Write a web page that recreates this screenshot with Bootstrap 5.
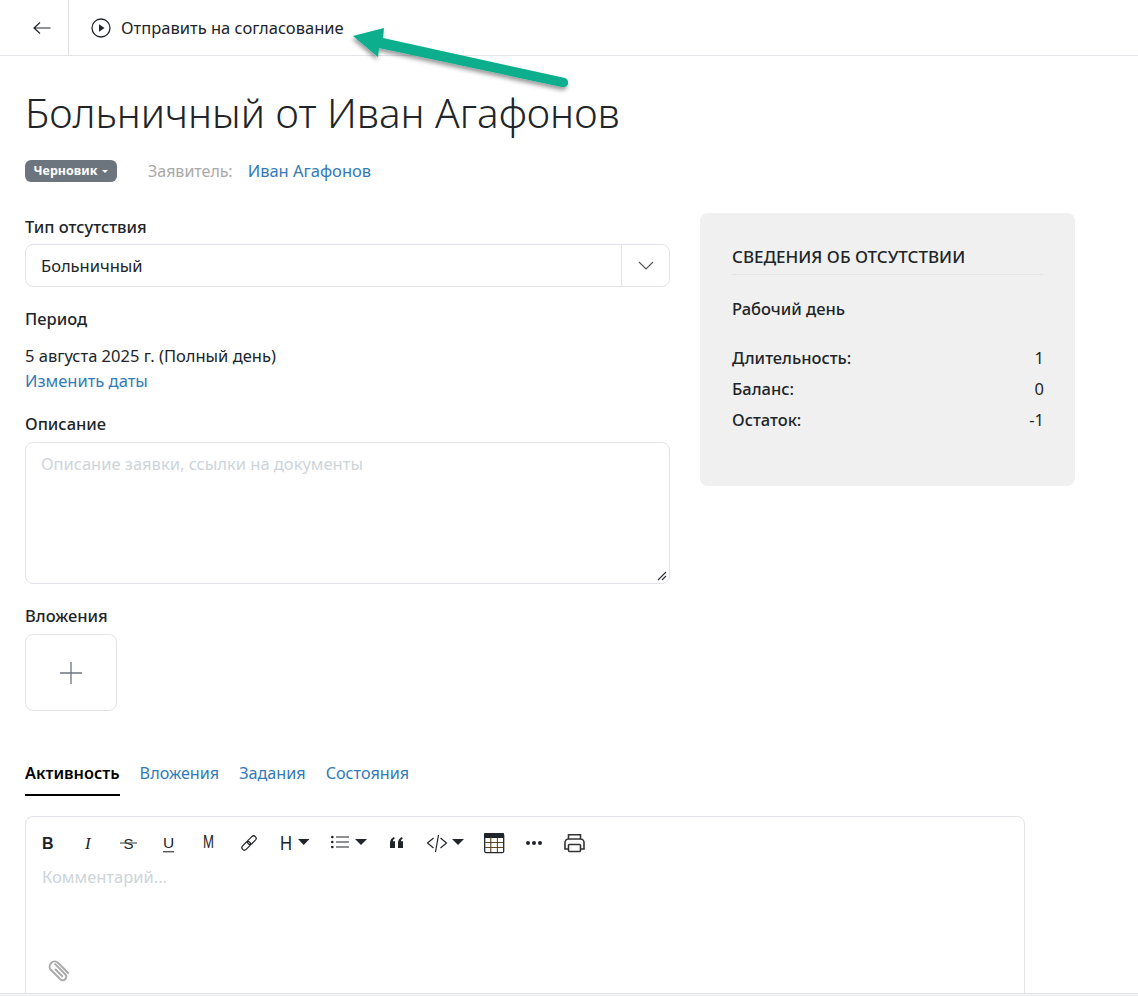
<!DOCTYPE html>
<html lang="ru"><head><meta charset="utf-8">
<link href="https://cdn.jsdelivr.net/npm/bootstrap@5.3.0/dist/css/bootstrap.min.css" rel="stylesheet">
<style>
html,body{height:996px;overflow:hidden}
body{font-family:"Noto Sans","Open Sans",sans-serif;font-size:16.5px;color:#212529;background:#fff}
.topbar{height:56px;border-bottom:1px solid #e3e4e8;position:relative}
.backcell{width:69px;border-right:1px solid #dfe1e6;padding-left:15px}
.sendbtn{padding-left:22px;gap:10px;color:#212529}
.sendtext{margin-top:2px}
.pagewrap{padding:0 25px}
.pagetitle{font-size:40.5px;font-weight:300;line-height:52px;margin:31px 0 20px;color:#212529}
.metarow{height:24px}
.statusbadge{background:#6c757d;color:#fff;font-size:12.5px;font-weight:700;border-radius:6px;width:92px;height:22px;gap:5px}
.caretmini{border-left:3px solid transparent;border-right:3px solid transparent;border-top:3px solid #fff}
.applabel{color:#a9a9a9;font-size:16px;margin-left:31px;margin-right:15px}
.applink,.linkblue{color:#337ab7;text-decoration:none}
.formcol{width:645px;flex:none}
.sidecol{width:375px;flex:none;margin-left:30px;margin-top:9px;height:273px;background:#f0f0f0;border-radius:8px;padding:32px}
.fieldlabel{font-weight:500;line-height:24px;margin-bottom:5px;color:#212529}
.selectbox{height:43px;border:1px solid #e2e3e8;border-radius:8px}
.selectval{padding-left:15px;padding-top:2px}
.selectcaret{width:48px;border-left:1px solid #e2e3e8}
.periodline{line-height:25px}
.descbox{height:142px;border:1px solid #e2e3e8;border-radius:8px;padding:9px 15px;color:#ced4da;position:relative}
.grip{position:absolute;right:2px;bottom:2px}
.addtile{width:92px;height:77px;border:1px solid #e2e3e8;border-radius:8px}
.sidehead{font-size:17px;font-weight:500;line-height:24px;padding-bottom:5px;border-bottom:1px solid #e4e4e4;margin-bottom:22px}
.siderow{line-height:31px}
.sideb{font-weight:500}
.sideval{margin-right:-1px}
.tabsrow{margin-top:50px;gap:20px;height:35px}
.tabitem{color:#337ab7;text-decoration:none;line-height:24px;height:35px;font-size:16.2px}
.tabitem.active-tab{color:#000;font-weight:600;border-bottom:2px solid #000;font-size:16.3px}
.editorbox{width:1000px;height:200px;margin-top:20px;border:1px solid #e2e3e8;border-radius:8px 8px 0 0;position:relative;padding:0 16px}
.toolrow{height:51px;align-items:flex-start;padding-top:14px;color:#212529}
.placeh{color:#ced4da;line-height:20px;margin-top:-1px}
.clip{position:absolute;left:22px;top:140px}
.bottomstrip{position:absolute;left:0;right:0;top:993px;height:3px;background:#f1f2f4;border-top:1px solid #e3e4e8}
.arrowover{position:absolute;left:345px;top:20px;pointer-events:none}
</style></head><body>
<div class="topbar d-flex">
  <div class="backcell d-flex align-items-center justify-content-center">
    <svg width="20" height="14" viewBox="0 0 20 14" fill="none" stroke="#212529" stroke-width="1.2"><path d="M18.5 7H2M8 1.5 2 7l6 5.5"/></svg>
  </div>
  <div class="sendbtn d-flex align-items-center">
    <svg width="20" height="20" viewBox="0 0 20 20"><circle cx="10" cy="10" r="9" fill="none" stroke="#212529" stroke-width="1.3"/><path d="M8 6.2 13.5 10 8 13.8z" fill="#212529"/></svg>
    <span class="sendtext">Отправить на согласование</span>
  </div>
</div>
<svg class="arrowover" width="240" height="80" viewBox="0 0 240 80"><defs><filter id="sh" x="-10%" y="-20%" width="120%" height="160%"><feDropShadow dx="-1" dy="3" stdDeviation="2" flood-color="#000" flood-opacity=".4"/></filter></defs><path d="M8 16 39 8 38 18 220 58C225 60 224 68 217 67L34 28 33 37z" fill="#09ae8d" filter="url(#sh)"/></svg>
<div class="pagewrap">
  <h1 class="pagetitle">Больничный от Иван Агафонов</h1>
  <div class="metarow d-flex align-items-center">
    <span class="statusbadge d-inline-flex align-items-center justify-content-center">Черновик <i class="caretmini"></i></span>
    <span class="applabel">Заявитель:</span>
    <a class="applink" href="#">Иван Агафонов</a>
  </div>
  <div class="d-flex" style="margin-top:21px">
    <div class="formcol">
      <div class="fieldlabel" style="margin-top:11px;margin-bottom:5px">Тип отсутствия</div>
      <div class="selectbox d-flex align-items-center">
        <div class="selectval flex-grow-1">Больничный</div>
        <div class="selectcaret h-100 d-flex align-items-center justify-content-center">
          <svg width="16" height="9" viewBox="0 0 16 9" fill="none" stroke="#555" stroke-width="1.1"><path d="M1 1l7 7 7-7"/></svg>
        </div>
      </div>
      <div class="fieldlabel" style="margin-top:20px;margin-bottom:12px">Период</div>
      <div class="periodline">5 августа 2025 г. (Полный день)</div>
      <a class="linkblue periodline d-block" href="#">Изменить даты</a>
      <div class="fieldlabel" style="margin-top:19px;margin-bottom:6px">Описание</div>
      <div class="descbox">Описание заявки, ссылки на документы
        <svg class="grip" width="10" height="10" viewBox="0 0 10 10" stroke="#333" stroke-width="1.1"><path d="M1 9 9 1M5 9 9 5"/></svg>
      </div>
      <div class="fieldlabel" style="margin-top:20px;margin-bottom:6px">Вложения</div>
      <div class="addtile d-flex align-items-center justify-content-center">
        <svg width="24" height="24" viewBox="0 0 24 24" stroke="#6c757d" stroke-width="1.3"><path d="M12 1v22M1 12h22"/></svg>
      </div>
    </div>
    <div class="sidecol">
      <div class="sidehead">СВЕДЕНИЯ ОБ ОТСУТСТВИИ</div>
      <div class="sideb" style="line-height:24px;margin-bottom:21px">Рабочий день</div>
      <div class="siderow d-flex justify-content-between"><span class="sideb">Длительность:</span><span class="sideval">1</span></div>
      <div class="siderow d-flex justify-content-between"><span class="sideb">Баланс:</span><span class="sideval">0</span></div>
      <div class="siderow d-flex justify-content-between"><span class="sideb">Остаток:</span><span class="sideval">-1</span></div>
    </div>
  </div>
  <div class="tabsrow d-flex">
    <a class="tabitem active-tab" href="#">Активность</a>
    <a class="tabitem" href="#">Вложения</a>
    <a class="tabitem" href="#">Задания</a>
    <a class="tabitem" href="#">Состояния</a>
  </div>
  <div class="editorbox">
    <div class="toolrow d-flex">
      <svg width="560" height="24" viewBox="0 0 560 24" style="display:block">
        <g fill="#212529" font-family="Liberation Sans,sans-serif">
          <text x="0" y="18" font-weight="700" font-size="16" textLength="11">B</text>
          <text x="43" y="18" font-style="italic" font-family="Liberation Serif,serif" font-size="17">I</text>
          <text x="81.500" y="17.500" font-size="15">S</text>
          <path d="M78 12h17" stroke="#555" stroke-width="1.200"/>
          <text x="121" y="17" font-size="15.500">U</text><path d="M121 20h11v1.400h-11z" fill="#555"/>
          <text x="161" y="17" font-size="18" textLength="11" lengthAdjust="spacingAndGlyphs">M</text>
          <g fill="none" stroke="#212529" stroke-width="1.200" transform="rotate(-45 207 12)"><rect x="198" y="9.500" width="10" height="5" rx="2.500"/><rect x="206" y="9.500" width="10" height="5" rx="2.500"/></g>
          <text x="238" y="19" font-size="21" textLength="12" lengthAdjust="spacingAndGlyphs">H</text><path d="M256 8h11.500l-5.750 6z"/>
          <circle cx="290.300" cy="6" r="1.300"/><circle cx="290.300" cy="11" r="1.300"/><circle cx="290.300" cy="16" r="1.300"/><path d="M294 5.500h13v1.100h-13zM294 10.500h13v1.100h-13zM294 15.500h13v1.100h-13z"/><path d="M313 8h12l-6 6z"/>
          <path d="M348 17v-5c0-3 1.700-5 4-6l.8 1.500c-1.200.8-1.800 1.600-1.900 2.700h2.100V17zM356 17v-5c0-3 1.700-5 4-6l.8 1.500c-1.200.8-1.800 1.600-1.900 2.700h2.100V17z"/>
          <g fill="none" stroke="#212529" stroke-width="1.200"><path d="M391.500 7l-6 5 6 5M398.500 7l6 5-6 5M396.500 4l-3 17"/></g><path d="M410 8h12l-6 6z"/>
          <rect x="442.700" y="2.700" width="19" height="19" rx="1.500" fill="#fff" stroke="#212529" stroke-width="1.300"/><rect x="442" y="2" width="20" height="5" rx="1" fill="#212529"/><path d="M448.800 7v14M455.400 7v14M443 11.500h18M443 16.500h18" stroke="#c87d2b" fill="none" stroke-width="1"/><path d="M448.800 7v14M455.400 7v14M443 11.500h18M443 16.500h18" stroke="#212529" fill="none" stroke-width=".6"/>
          <circle cx="486" cy="12" r="2"/><circle cx="492" cy="12" r="2"/><circle cx="498" cy="12" r="2"/>
          <g fill="none" stroke="#333" stroke-width="1.600"><path d="M526.500 8V3.800h12V8M526.500 18H523v-6.500a3.500 3.500 0 0 1 3.500-3.500h12a3.500 3.500 0 0 1 3.500 3.500V18h-3.500"/><rect x="526.500" y="13.500" width="12" height="7" rx="1"/></g>
        </g>
      </svg>
    </div>
    <div class="placeh">Комментарий...</div>
    <svg class="clip" width="26" height="26" viewBox="0 0 26 26" fill="none" stroke="#aaa" stroke-width="2"><g transform="rotate(45 13 13)"><path d="M4 13h15a3.500 3.500 0 0 1 0 7H6a5 5 0 0 1 0-10h15"/><path d="M8 16.500h11"/></g></svg>
  </div>
</div>
<div class="bottomstrip"></div>
</body></html>
